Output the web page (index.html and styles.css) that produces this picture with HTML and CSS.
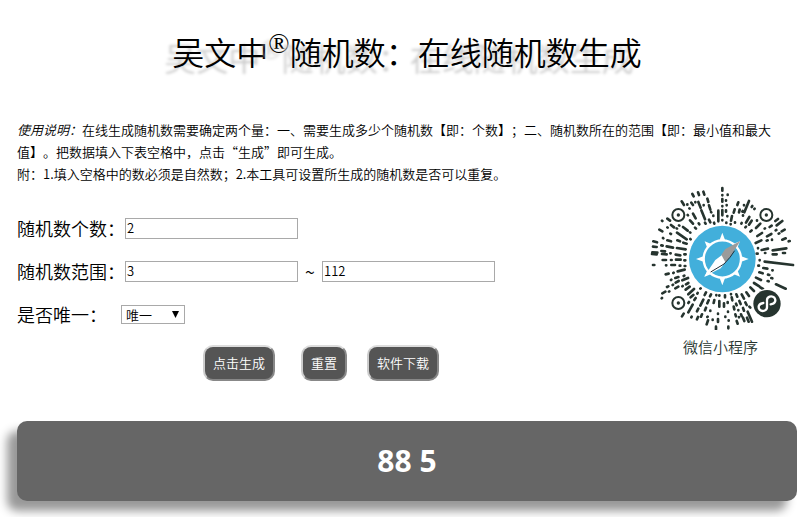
FILE: index.html
```
<!DOCTYPE html>
<html lang="zh-CN">
<head>
    <meta charset="UTF-8">
    <meta name="viewport" content="width=device-width, initial-scale=1.0">
    <title>吴文中随机数：在线随机数生成</title>
    <link rel="stylesheet" href="styles.css">
</head>
<body>
    <h1>吴文中<sup>®</sup>随机数：在线随机数生成</h1>
    <div class="intro">
        <p><em>使用说明：</em>在线生成随机数需要确定两个量：一、需要生成多少个随机数【即：个数】；二、随机数所在的范围【即：最小值和最大值】。把数据填入下表空格中，点击“生成”即可生成。</p>
        <p>附：1.填入空格中的数必须是自然数；2.本工具可设置所生成的随机数是否可以重复。</p>
    </div>
    <div class="main">
        <form class="settings">
            <div class="row">
                <label for="count">随机数个数：</label>
                <input type="text" id="count" value="2">
            </div>
            <div class="row">
                <label for="min">随机数范围：</label>
                <input type="text" id="min" value="3">
                <span class="tilde">~</span>
                <input type="text" id="max" value="112" aria-label="最大值">
            </div>
            <div class="row">
                <label for="unique">是否唯一：</label>
                <select id="unique">
                    <option>唯一</option>
                    <option>不唯一</option>
                </select>
            </div>
            <div class="buttons">
                <button type="button" class="generate">点击生成</button>
                <button type="reset">重置</button>
                <button type="button">软件下载</button>
            </div>
        </form>
        <figure class="qr">
            <svg viewBox="30 15 435 435" role="img" aria-label="微信小程序">
                <!-- rays -->
                <g fill="none" stroke="#26342f" stroke-width="8" stroke-linecap="round">
                    <path d="M247 24v8M247 45v1M247 57v8M247 78v1M235 92v32M247 90v16M247 120v1M259 128v1M258 61v1M263 44v1M260 75v1M258 91v4M262 108v1"/>
                    <path d="M157 42l4 7M174 37l3 8M190 35l3 9M125 64l7 11M142 73v1M154 68l5 7M166 66v1M175 66l7 17M184 91l11 27M202 56l3 10M207 76l4 13M213 96l1 1M191 75v1M148 85l1 1M159 101l8 14M176 130l2 3M195 128l2 3M207 119l4 8M222 128l1 3M220 107v1M143 105l1 1M150 121l9 10M165 143l3 3"/>
                    <path d="M295 67l-3 8M284 88l-3 10M276 108l-3 14M272 132v1M285 127v1M299 89l-2 8M312 75v1M308 93l-1 2M327 63l-14 34M309 106v1M337 78l-2 3M344 86l-1 1M328 111l-10 17M305 129l-1 2M335 122l-8 12M351 121v1M361 131l-13 13M318 140l-2 2M335 151l-4 4"/>
                    <path d="M82 116l8 6M66 122l1 1M58 149l9 5M82 142l1 1M93 135l9 7M110 145l1 1M117 136l1 1M91 161l2 1M111 158l29 20M129 141l14 11M150 157l1 1M151 177l1 1M40 184l11 3M69 174l1 1M82 181l11 3M112 181l8 3M130 188l10 3M39 200l11 1M64 196l4 1M80 199l19 4M111 204l26 4M37 217l15 1M64 213l11 1M36 222l14 1M66 222l14 1M91 220l1 0M107 224l14 2M133 223l4 0M39 255h4M68 240h10M93 240h2M108 239h14M133 241h3"/>
                    <path d="M414 117l-8 6M427 123l-17 13M395 137l-6 4M375 145l-1 1M434 149l-9 5M409 150l-2 1M418 160l-2 1M394 162l-13 7M366 159l-14 9M364 181l-17 8M396 179v1M383 181l-3 1M437 175l-10 4M449 183l-3 1M439 205l-41 6M384 206l-19 4M354 204v1M350 221h3M375 219h1M435 219h-6M410 223h-12M374 245l85 10M359 240v1M355 257h2M370 264l12 2M397 271l1 0M358 277l10 3M384 284l4 1M348 293l15 7M383 303l3 1M408 313l29 13M361 322l8 5M342 309l16 10M394 294l3 1"/>
                    <path d="M78 256h1M94 255h11M119 257h2M134 258h2M77 283l9-2M100 279l1-1M113 274l21-5M93 300l1-1M106 294l9-3M131 288l2-1M81 321l4-2M98 315l1-1M107 308l9-5M127 301l17-7M87 335l1-1M67 340l9-5M106 325l9-5M127 319l1-1M138 313l7-4M137 329l12-9M65 355l1-1M145 343l17-16M152 352l8-7M181 326l1-1M163 360l4-6M172 341l1-2M145 369l2-3M126 409l5-8M145 397l13-23M154 412l1-2M171 394l4-8M181 377l9-18M194 345l4-8M171 418l3-7M183 410l3-7M195 391l3-8M202 370l4-9M210 349l3-6M200 433l4-12M202 411l1-1M211 393v-1M221 369l2-9M229 346v-1M218 420v-1M228 448v-8M234 426v-9M234 402v-1M238 380v-17M238 347v-1"/>
                    <path d="M255 346v6M252 370v10M263 366v3M264 395v1M266 421v1M265 440v5M256 410v1M275 352l2 9M281 380l2 8M286 403l2 6M273 342v1M289 343l3 7M298 363l4 9M309 384l3 8M288 371l2 5M295 390v1M290 423l3 8M309 413l4 10M297 411v1M305 343l7 13M316 367l4 8M323 395l13 30M321 413l5 12M303 403l2 5M319 337l8 11M331 322l11 11M328 380l3 3"/>
                </g>
                <!-- corner markers -->
                <g fill="#fff" stroke="#26342f" stroke-width="6">
                    <circle cx="115" cy="105" r="18"/>
                    <circle cx="379" cy="105" r="18"/>
                    <circle cx="115" cy="369" r="18"/>
                </g>
                <g fill="#26342f">
                    <circle cx="115" cy="105" r="5"/>
                    <circle cx="379" cy="105" r="5"/>
                    <circle cx="115" cy="369" r="5"/>
                </g>
                <!-- compass -->
                <circle cx="247" cy="237" r="100" fill="#42afdb"/>
                <circle cx="247" cy="237" r="56" fill="none" stroke="#fff" stroke-width="7"/>
                <path fill="#fff" d="M247 158l9 24h-18zM247 316l9-24h-18zM168 237l24-9v18zM326 237l-24-9v18zM194 184l20 8-12 12zM300 184l-20 8 12 12zM194 290l20-8-12-12zM300 290l-20-8 12-12z"/>
                <path fill="#fff" d="M192 290l34-50 20-15 13 18-17 22z"/>
                <path fill="#9b9b9b" d="M244 224l12-17 45-24-33 51-12 13z"/>
                <path fill="none" stroke="#233039" stroke-width="3" d="M284 212l-14 20-18 20-40 24"/>
                <!-- mini program badge -->
                <circle cx="381" cy="371" r="45" fill="#fff"/>
                <circle cx="381" cy="371" r="41" fill="#26342f"/>
                <path fill="none" stroke="#fff" stroke-width="7" stroke-linecap="round" d="M392 373c14-2 17-12 11-20-8-8-22-3-22 7v22c0 10-14 15-22 7-6-8-3-18 11-20"/>
            </svg>
            <figcaption>微信小程序</figcaption>
        </figure>
    </div>
    <output class="result" for="count min max unique">88 5</output>
</body>
</html>
```
FILE: styles.css
```
* {
    box-sizing: border-box;
}
body {
    margin: 0;
    padding: 29px 15px 16px 17px;
    font-family: "Noto Sans CJK SC", sans-serif;
    font-size: 13px;
    font-weight: 350;
    line-height: 22px;
    color: #000;
    background: #fff;
    text-spacing-trim: space-all;
}
h1 {
    margin: 0 0 46px;
    font-size: 32px;
    font-weight: 350;
    line-height: 44px;
    text-align: center;
    text-shadow: -8px 6px 3px #ccc;
}
h1 sup {
    font-family: "Liberation Serif", serif;
    font-size: 28px;
    font-weight: 400;
    line-height: 0;
    vertical-align: 12px;
}
.intro p {
    margin: 0;
}
.main {
    display: flex;
    justify-content: space-between;
    align-items: flex-start;
}
.settings {
    flex: 1;
    padding-top: 31px;
}
.row {
    display: flex;
    align-items: center;
    height: 24px;
    margin-bottom: 19px;
}
.row label {
    width: 108px;
    font-size: 18px;
}
.row input {
    width: 173px;
    height: 21px;
    padding: 1px;
    border: 1px solid #a9a9a9;
    font: inherit;
}
.tilde {
    width: 24px;
    font-size: 18px;
    text-align: center;
}
.row select {
    appearance: none;
    width: 64px;
    height: 19px;
    margin-left: -4px;
    padding: 0 4px;
    border: 1px solid #a9a9a9;
    border-radius: 0;
    font: inherit;
    line-height: 17px;
    color: #000;
    background: #fff url("data:image/svg+xml,%3Csvg xmlns='http://www.w3.org/2000/svg' width='7' height='7'%3E%3Cpath d='M0 0h7L3.5 7z'/%3E%3C/svg%3E") no-repeat right 5px top 5px;
}
.buttons {
    display: flex;
    gap: 20px;
    padding-left: 186px;
}
.buttons button {
    height: 36px;
    padding: 0 8px;
    border: 2px solid;
    border-color: #ddd #888 #888 #ccc;
    border-radius: 10px;
    font: inherit;
    color: #fff;
    background: #555;
}
.buttons .generate {
    margin-right: 6px;
}
.qr {
    width: 145px;
    margin: 0 2px 0 0;
    text-align: center;
}
.qr svg {
    display: block;
    width: 100%;
}
.qr figcaption {
    margin-top: 6px;
    padding-right: 4px;
    font-size: 15px;
    color: #26342f;
}
.result {
    display: block;
    margin-top: 40px;
    border-radius: 10px;
    font-family: "Open Sans", "Noto Sans", sans-serif;
    font-size: 30px;
    font-weight: bold;
    line-height: 80px;
    text-align: center;
    color: #fff;
    background: #666;
    box-shadow: -10px 10px 10px #999;
}
```
